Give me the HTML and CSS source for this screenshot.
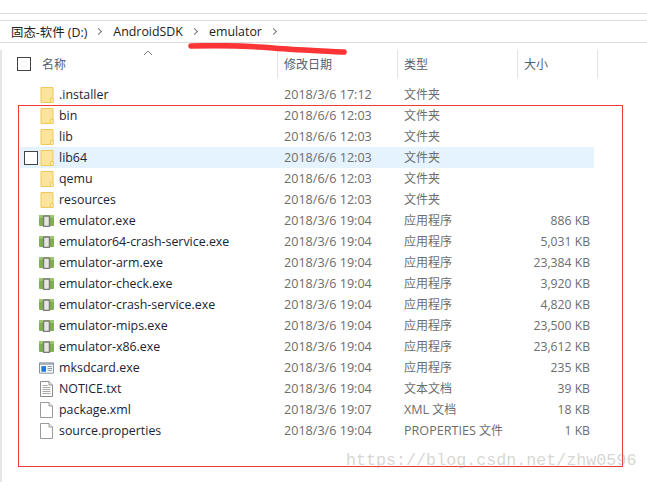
FILE: index.html
```html
<!DOCTYPE html>
<html lang="en">
  <head>
    <meta charset="UTF-8" />
    <title>emulator</title>
    <link rel="stylesheet" href="styles.css">
  </head>
  <body>
    <svg class="defs" width="0" height="0">
      <symbol id="folder" viewBox="0 0 14 16">
        <path d="M1 .5h12v15H1z" fill="#fde49b" stroke="#edc95f" />
        <path d="M10.5 15.500v-4h2.500v4z" fill="#fff3c9" stroke="#edc95f" />
      </symbol>
      <symbol id="exe" viewBox="0 0 15 12">
        <rect x="0" y="0" width="15" height="11" rx="1" fill="#7fb14a" />
        <rect x="0" y="0" width="15" height="3" fill="#9cc66c" />
        <rect x="4.500" y="1" width="6" height="10.500" rx="1" fill="#e4e6e2" stroke="#7b7b7b" stroke-width="1.500" />
      </symbol>
      <symbol id="window" viewBox="0 0 16 12">
        <path d="M.5.5h15v11H.5z" fill="#fff" stroke="#7d8a99" />
        <path d="M1 1h14v1.500H1z" fill="#8d99a8" />
        <path d="M2.500 4h5v6h-5z" fill="#1f7ad6" />
        <path d="M9 4.500h5M9 6.500h5M9 8.500h5" stroke="#7d8a99" />
      </symbol>
      <symbol id="text" viewBox="0 0 13 16">
        <path d="M.5.500h8.500l3.500 3.500v11.500H.5z" fill="#fff" stroke="#8c8c8c" />
        <path d="M9 .500v3.500h3.500" fill="#eee" stroke="#8c8c8c" />
        <path d="M2.500 4.500h5M2.500 6.500h8M2.500 8.500h8M2.500 10.500h8M2.500 12.500h8" stroke="#a8a8a8" />
      </symbol>
      <symbol id="blank" viewBox="0 0 13 16">
        <path d="M.5.500h8.500l3.500 3.500v11.500H.5z" fill="#fff" stroke="#9a9a9a" />
        <path d="M9 .500v3.500h3.500" fill="#f2f2f2" stroke="#9a9a9a" />
      </symbol>
    </svg>

    <div class="ribbon"></div>
    <div class="crumbs">
      <span>固态-软件 (D:)</span>
      <span class="chev"></span>
      <span>AndroidSDK</span>
      <span class="chev"></span>
      <span>emulator</span>
      <span class="chev"></span>
    </div>

    <div class="pane">
      <div class="head">
        <div class="head-name">
          <span class="check"></span>
          <span>名称</span>
          <svg class="caret" width="10" height="6" viewBox="0 0 10 6"><path d="M1 5l4-4 4 4" fill="none" stroke="#7a7a7a" /></svg>
        </div>
        <div class="head-col">修改日期</div>
        <div class="head-col">类型</div>
        <div class="head-col">大小</div>
      </div>

      <div class="list">
        <div class="row"><div class="name"><svg class="ico-folder"><use href="#folder" /></svg>.installer</div><div class="date">2018/3/6 17:12</div><div class="type">文件夹</div><div class="size"></div></div>
        <div class="row"><div class="name"><svg class="ico-folder"><use href="#folder" /></svg>bin</div><div class="date">2018/6/6 12:03</div><div class="type">文件夹</div><div class="size"></div></div>
        <div class="row"><div class="name"><svg class="ico-folder"><use href="#folder" /></svg>lib</div><div class="date">2018/6/6 12:03</div><div class="type">文件夹</div><div class="size"></div></div>
        <div class="row hover"><span class="check row-check"></span><div class="name"><svg class="ico-folder"><use href="#folder" /></svg>lib64</div><div class="date">2018/6/6 12:03</div><div class="type">文件夹</div><div class="size"></div></div>
        <div class="row"><div class="name"><svg class="ico-folder"><use href="#folder" /></svg>qemu</div><div class="date">2018/6/6 12:03</div><div class="type">文件夹</div><div class="size"></div></div>
        <div class="row"><div class="name"><svg class="ico-folder"><use href="#folder" /></svg>resources</div><div class="date">2018/6/6 12:03</div><div class="type">文件夹</div><div class="size"></div></div>
        <div class="row"><div class="name"><svg class="ico-exe"><use href="#exe" /></svg>emulator.exe</div><div class="date">2018/3/6 19:04</div><div class="type">应用程序</div><div class="size">886 KB</div></div>
        <div class="row"><div class="name"><svg class="ico-exe"><use href="#exe" /></svg>emulator64-crash-service.exe</div><div class="date">2018/3/6 19:04</div><div class="type">应用程序</div><div class="size">5,031 KB</div></div>
        <div class="row"><div class="name"><svg class="ico-exe"><use href="#exe" /></svg>emulator-arm.exe</div><div class="date">2018/3/6 19:04</div><div class="type">应用程序</div><div class="size">23,384 KB</div></div>
        <div class="row"><div class="name"><svg class="ico-exe"><use href="#exe" /></svg>emulator-check.exe</div><div class="date">2018/3/6 19:04</div><div class="type">应用程序</div><div class="size">3,920 KB</div></div>
        <div class="row"><div class="name"><svg class="ico-exe"><use href="#exe" /></svg>emulator-crash-service.exe</div><div class="date">2018/3/6 19:04</div><div class="type">应用程序</div><div class="size">4,820 KB</div></div>
        <div class="row"><div class="name"><svg class="ico-exe"><use href="#exe" /></svg>emulator-mips.exe</div><div class="date">2018/3/6 19:04</div><div class="type">应用程序</div><div class="size">23,500 KB</div></div>
        <div class="row"><div class="name"><svg class="ico-exe"><use href="#exe" /></svg>emulator-x86.exe</div><div class="date">2018/3/6 19:04</div><div class="type">应用程序</div><div class="size">23,612 KB</div></div>
        <div class="row"><div class="name"><svg class="ico-exe"><use href="#window" /></svg>mksdcard.exe</div><div class="date">2018/3/6 19:04</div><div class="type">应用程序</div><div class="size">235 KB</div></div>
        <div class="row"><div class="name"><svg class="ico-doc"><use href="#text" /></svg>NOTICE.txt</div><div class="date">2018/3/6 19:04</div><div class="type">文本文档</div><div class="size">39 KB</div></div>
        <div class="row"><div class="name"><svg class="ico-doc"><use href="#blank" /></svg>package.xml</div><div class="date">2018/3/6 19:07</div><div class="type"><span class="latin">XML</span> 文档</div><div class="size">18 KB</div></div>
        <div class="row"><div class="name"><svg class="ico-doc"><use href="#blank" /></svg>source.properties</div><div class="date">2018/3/6 19:04</div><div class="type"><span class="latin">PROPERTIES</span> 文件</div><div class="size">1 KB</div></div>
      </div>
    </div>

    <!-- annotations drawn on top of the screenshot -->
    <div class="red-box"></div>
    <svg class="red-line" width="160" height="12" viewBox="0 0 160 12">
      <path d="M3 3C40 2 62 3 85 5s50 3 71 4" fill="none" stroke="#fb3535" stroke-width="5.500" stroke-linecap="round" />
    </svg>
    <div class="watermark">https://blog.csdn.net/zhw0596</div>
  </body>
</html>
```

FILE: styles.css
```css
body {
  margin: 0;
  height: 482px;
  position: relative;
  overflow: hidden;
  background: white;
  font-family: "Open Sans", "Noto Sans CJK SC", sans-serif;
  font-size: 12px;
}

.defs {
  position: absolute;
}

.ribbon {
  height: 13px;
  border-bottom: 1px solid #dcdcdc;
}

.crumbs {
  margin-top: 6px;
  height: 21px;
  border-top: 1px solid #dcdcdc;
  border-bottom: 1px solid #dcdcdc;
  padding-left: 11px;
  display: flex;
  align-items: center;
  color: #222;
  font-size: 12.4px;
}

.chev {
  width: 4px;
  height: 4px;
  margin-inline: 9px 12px;
  border-top: 1px solid #777;
  border-right: 1px solid #777;
  transform: rotate(45deg);
}

.pane {
  margin-top: 7px;
  height: 432px;
  border-left: 2px solid #e6e6e6;
}

.head {
  height: 28px;
  display: grid;
  grid-template-columns: 275px 120px 120px 81px;
  align-items: stretch;
  color: #55606e;
}

.head-name {
  position: relative;
  display: flex;
  align-items: center;
  gap: 11px;
  padding-left: 15px;
}

.head-col {
  display: flex;
  align-items: center;
  padding-left: 6px;
  border-left: 1px solid #e4e4e4;
}

.head-col:last-child {
  border-right: 1px solid #e4e4e4;
}

.caret {
  position: absolute;
  left: 141px;
  top: 0;
}

.check {
  width: 12px;
  height: 12px;
  border: 1px solid #444;
  background: white;
}

.list {
  margin-top: 6px;
  margin-left: 18px;
  width: 574px;
}

.row {
  position: relative;
  height: 21px;
  display: grid;
  grid-template-columns: 264px 120px 100px 86px;
  align-items: center;
  color: #6d6d6d;
}

.row.hover {
  background: #e5f3fe;
}

.row-check {
  position: absolute;
  left: 4px;
  top: 4px;
}

.name {
  display: flex;
  align-items: center;
  padding-left: 20px;
  color: #1c2433;
  font-size: 12.4px;
  white-space: nowrap;
}

.name svg {
  margin-right: 5px;
}

.ico-folder {
  width: 14px;
  height: 16px;
}

.ico-exe {
  width: 15px;
  height: 12px;
  margin-left: -1px;
}

.ico-doc {
  width: 13px;
  height: 16px;
  margin-right: 6px !important;
}

.date {
  font-size: 12.6px;
}

.type {
  padding-bottom: 2px;
  white-space: nowrap;
}

.latin {
  font-size: 12.6px;
}

.size {
  text-align: right;
  font-size: 12.2px;
}

.red-box {
  position: absolute;
  left: 18px;
  top: 105px;
  width: 603px;
  height: 360px;
  border: 1px solid #f03a3a;
}

.red-line {
  position: absolute;
  left: 188px;
  top: 43px;
}

.watermark {
  position: absolute;
  left: 346px;
  top: 451px;
  font-family: "Liberation Mono", monospace;
  font-size: 16.7px;
  color: rgba(150, 150, 140, 0.4);
  white-space: nowrap;
}
```
